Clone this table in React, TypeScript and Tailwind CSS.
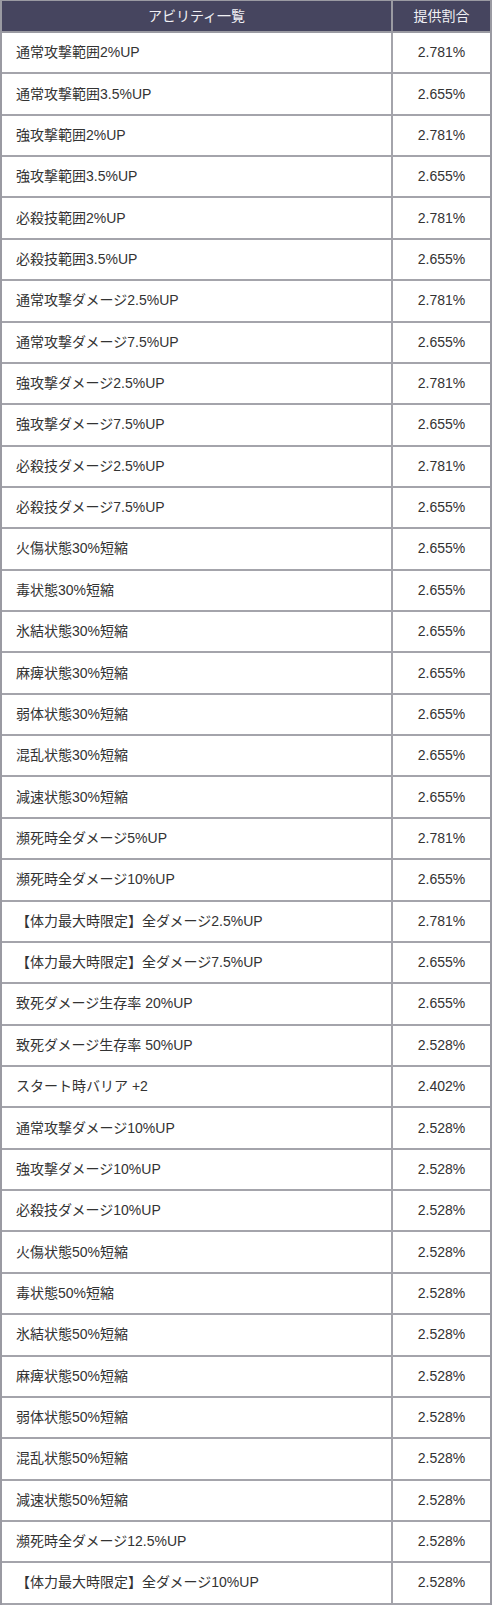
import React from 'react';

const rows: [string, string][] = [
  ['通常攻撃範囲2%UP', '2.781%'],
  ['通常攻撃範囲3.5%UP', '2.655%'],
  ['強攻撃範囲2%UP', '2.781%'],
  ['強攻撃範囲3.5%UP', '2.655%'],
  ['必殺技範囲2%UP', '2.781%'],
  ['必殺技範囲3.5%UP', '2.655%'],
  ['通常攻撃ダメージ2.5%UP', '2.781%'],
  ['通常攻撃ダメージ7.5%UP', '2.655%'],
  ['強攻撃ダメージ2.5%UP', '2.781%'],
  ['強攻撃ダメージ7.5%UP', '2.655%'],
  ['必殺技ダメージ2.5%UP', '2.781%'],
  ['必殺技ダメージ7.5%UP', '2.655%'],
  ['火傷状態30%短縮', '2.655%'],
  ['毒状態30%短縮', '2.655%'],
  ['氷結状態30%短縮', '2.655%'],
  ['麻痺状態30%短縮', '2.655%'],
  ['弱体状態30%短縮', '2.655%'],
  ['混乱状態30%短縮', '2.655%'],
  ['減速状態30%短縮', '2.655%'],
  ['瀕死時全ダメージ5%UP', '2.781%'],
  ['瀕死時全ダメージ10%UP', '2.655%'],
  ['【体力最大時限定】全ダメージ2.5%UP', '2.781%'],
  ['【体力最大時限定】全ダメージ7.5%UP', '2.655%'],
  ['致死ダメージ生存率 20%UP', '2.655%'],
  ['致死ダメージ生存率 50%UP', '2.528%'],
  ['スタート時バリア +2', '2.402%'],
  ['通常攻撃ダメージ10%UP', '2.528%'],
  ['強攻撃ダメージ10%UP', '2.528%'],
  ['必殺技ダメージ10%UP', '2.528%'],
  ['火傷状態50%短縮', '2.528%'],
  ['毒状態50%短縮', '2.528%'],
  ['氷結状態50%短縮', '2.528%'],
  ['麻痺状態50%短縮', '2.528%'],
  ['弱体状態50%短縮', '2.528%'],
  ['混乱状態50%短縮', '2.528%'],
  ['減速状態50%短縮', '2.528%'],
  ['瀕死時全ダメージ12.5%UP', '2.528%'],
  ['【体力最大時限定】全ダメージ10%UP', '2.528%'],
];

export default function App() {
  return (
    <div
      className="w-[493px] bg-white text-[#333] pb-[2px]"
      style={{ fontFamily: '"Liberation Sans", "Noto Sans CJK JP", sans-serif' }}
    >
      <div className="w-[492px] border-x-2 border-t border-[#9a9aa2]">
        <div className="flex h-[32px] bg-[#46455f] text-[#f0f0f4] text-[14px] border-b-2 border-[#9a9aa2]">
          <div className="w-[391px] flex items-center justify-center border-r-2 border-[#9a9aa2]">アビリティ一覧</div>
          <div className="flex-1 flex items-center justify-center">提供割合</div>
        </div>
        {rows.map(([name, rate], i) => (
          <div key={i} className="flex h-[41.37px] text-[14px] border-b-2 border-[#a4a4ab]">
            <div className="w-[391px] flex items-center pl-[14px] border-r-2 border-[#a4a4ab]">{name}</div>
            <div className="flex-1 flex items-center justify-center">{rate}</div>
          </div>
        ))}
      </div>
    </div>
  );
}
